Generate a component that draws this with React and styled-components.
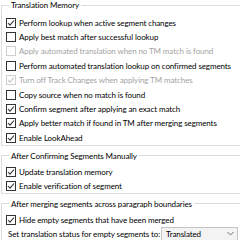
import React from "react";
import styled, { createGlobalStyle } from "styled-components";

const Global = createGlobalStyle`
  html, body {
    margin: 0;
    padding: 0;
    background: #ffffff;
    overflow: hidden;
  }
  body {
    font-family: "Lato", "Noto Sans", sans-serif;
    font-size: 8px;
    letter-spacing: -0.1px;
    color: #000000;
  }
`;

const Page = styled.div`
  width: 300px;
  padding-left: 1px;
`;

const Group = styled.fieldset`
  margin: ${(p) => p.$top || 0}px 0 0 0;
  border: 1px solid #dcdcdc;
  padding: ${(p) => p.$pad || 4}px 0 ${(p) => p.$bottom || 0}px 4px;
  min-width: 0;
`;

const Legend = styled.legend`
  margin-left: 3px;
  padding: 0 2px;
  line-height: 10px;
  color: #000000;
`;

const Row = styled.label`
  display: flex;
  align-items: center;
  gap: 3px;
  height: ${(p) => p.$h || 14.4}px;
  color: ${(p) => (p.$disabled ? "#a3a3a3" : "#000000")};
  white-space: nowrap;
`;

const Box = styled.span`
  box-sizing: border-box;
  width: 10px;
  height: 10px;
  flex: none;
  border: 1px solid ${(p) => (p.$disabled ? "#cfcfcf" : "#333333")};
  background: #ffffff;
  display: flex;
  align-items: center;
  justify-content: center;
`;

const StatusRow = styled.div`
  display: grid;
  grid-template-columns: 153px 77px;
  align-items: center;
  padding-left: 2px;
  height: 14px;
  white-space: nowrap;
`;

const Select = styled.div`
  box-sizing: border-box;
  height: 14px;
  border: 1px solid #c4c4c4;
  background: #f3f3f3;
  display: flex;
  align-items: center;
  justify-content: space-between;
  padding: 0 3px 0 4px;
  color: #000000;
`;

const Check = ({ checked, disabled }) => (
  <Box $disabled={disabled}>
    {checked && (
      <svg width="8" height="8" viewBox="0 0 8 8">
        <polyline
          points="1,4 3,6.2 7,1.5"
          fill="none"
          stroke={disabled ? "#c4c4c4" : "#333333"}
          strokeWidth="1.1"
        />
      </svg>
    )}
  </Box>
);

const Option = ({ checked, disabled, h, children }) => (
  <Row $disabled={disabled} $h={h}>
    <Check checked={checked} disabled={disabled} />
    <span>{children}</span>
  </Row>
);

const tmOptions = [
  { text: "Perform lookup when active segment changes", checked: true },
  { text: "Apply best match after successful lookup" },
  { text: "Apply automated translation when no TM match is found", disabled: true },
  { text: "Perform automated translation lookup on confirmed segments" },
  { text: "Turn off Track Changes when applying TM matches", checked: true, disabled: true },
  { text: "Copy source when no match is found" },
  { text: "Confirm segment after applying an exact match", checked: true },
  { text: "Apply better match if found in TM after merging segments", checked: true },
  { text: "Enable LookAhead", checked: true },
];

export default function App() {
  return (
    <Page>
      <Global />
      <Group $pad={5.5} $bottom={0}>
        <Legend>Translation Memory</Legend>
        {tmOptions.map((o) => (
          <Option key={o.text} checked={o.checked} disabled={o.disabled}>
            {o.text}
          </Option>
        ))}
      </Group>
      <Group $top={4.5} $pad={4}>
        <Legend>After Confirming Segments Manually</Legend>
        <Option checked h={14}>Update translation memory</Option>
        <Option checked h={14}>Enable verification of segment</Option>
      </Group>
      <Group $top={5} $pad={4}>
        <Legend>After merging segments across paragraph boundaries</Legend>
        <Option checked h={14}>Hide empty segments that have been merged</Option>
        <StatusRow>
          <span>Set translation status for empty segments to:</span>
          <Select>
            <span>Translated</span>
            <svg width="7" height="5" viewBox="0 0 7 5">
              <polyline points="0.5,1 3.5,4 6.5,1" fill="none" stroke="#707070" strokeWidth="1" />
            </svg>
          </Select>
        </StatusRow>
      </Group>
    </Page>
  );
}
